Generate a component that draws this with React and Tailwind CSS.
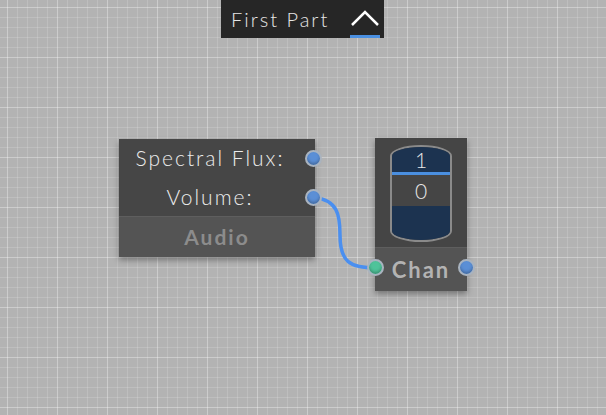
// Node editor canvas: grid background, two nodes, one wire, section tab on top
const font = { fontFamily: '"Lato", "Noto Sans", sans-serif' }

function Port({ color = 'bg-[#5b8fd6]', className = '' }) {
  return (
    <div
      className={`absolute w-[17px] h-[17px] rounded-full border-[2px] border-[#a9b3bf] ${color} shadow-[inset_0_-2px_3px_rgba(0,0,0,0.25)] ${className}`}
    />
  )
}

function AudioNode() {
  return (
    <div className="absolute left-[119px] top-[139px] w-[196px] h-[118px] shadow-[0_3px_6px_rgba(0,0,0,0.35)]">
      <div className="h-[77px] bg-[#464646] flex flex-col items-center pt-[8px] gap-[17px] text-[#ececec] text-[21px] font-light leading-[22px] tracking-[2px]">
        <span className="pr-[14px]">Spectral Flux:</span>
        <span className="pr-[14px]">Volume:</span>
      </div>
      <div className="h-px bg-[#5e5e5e]" />
      <div className="h-[40px] bg-[#545454] flex items-center justify-center text-[#8c8c8c] text-[21px] font-bold tracking-[2px]">
        Audio
      </div>
      <Port className="left-[186px] top-[11px]" />
      <Port className="left-[186px] top-[50px]" />
    </div>
  )
}

function ChanNode() {
  return (
    <div className="absolute left-[375px] top-[138px] w-[92px] h-[153px] shadow-[0_3px_6px_rgba(0,0,0,0.35)]">
      <div className="h-[109px] bg-[#454545] flex justify-center pt-[7px]">
        <div className="w-[62px] h-[97px] border-[2px] border-[#8a8a8a] rounded-[50%/11px] overflow-hidden flex flex-col">
          <div className="h-[25px] bg-[#1c3350] flex items-end justify-center text-[#e8e8e8] text-[21px] font-light leading-[24px]">1</div>
          <div className="h-[3px] bg-[#4a8fe0]" />
          <div className="h-[31px] bg-[#454545] flex items-center justify-center text-[#e8e8e8] text-[21px] font-light">0</div>
          <div className="flex-1 bg-[#1c3350]" />
        </div>
      </div>
      <div className="h-px bg-[#5e5e5e]" />
      <div className="h-[43px] bg-[#545454] flex items-center justify-center text-[#b3b3b3] text-[22px] font-bold tracking-[2px]">
        Chan
      </div>
      <Port color="bg-[#4fc39a]" className="-left-[8px] top-[121px]" />
      <Port className="left-[83px] top-[121px]" />
    </div>
  )
}

export default function App() {
  return (
    <div
      className="relative w-[606px] h-[415px] overflow-hidden bg-[#b3b3b3] bg-[linear-gradient(to_right,rgba(255,255,255,0.22)_1px,transparent_1px),linear-gradient(to_bottom,rgba(255,255,255,0.22)_1px,transparent_1px),linear-gradient(to_right,rgba(255,255,255,0.14)_1px,transparent_1px),linear-gradient(to_bottom,rgba(255,255,255,0.14)_1px,transparent_1px)] bg-[size:50px_50px,50px_50px,10px_10px,10px_10px] bg-[position:7px_7px]"
      style={font}
    >
      {/* wire */}
      <svg className="absolute inset-0" width="606" height="415">
        <path d="M313 197 C 338 200, 340 215, 340 235 C 340 262, 350 268, 376 268" fill="none" stroke="#4a8ff0" strokeWidth="3.5" />
      </svg>

      <AudioNode />
      <ChanNode />

      {/* section tab */}
      <div className="absolute left-[221px] top-0 w-[163px] h-[38px] bg-[#262626] flex items-center pl-[10px] text-[#e6e6e6] text-[20px] font-light tracking-[2px]">
        <span>First Part</span>
        <div className="ml-auto mr-[4px] w-[30px] h-[38px] flex flex-col items-center justify-end">
          <svg width="30" height="18" viewBox="0 0 30 18" className="mb-[8px]">
            <path d="M2 16 L15 3 L28 16" fill="none" stroke="#ffffff" strokeWidth="2.5" />
          </svg>
          <div className="w-[30px] h-[3px] bg-[#4a8fe0]" />
        </div>
      </div>
    </div>
  )
}
